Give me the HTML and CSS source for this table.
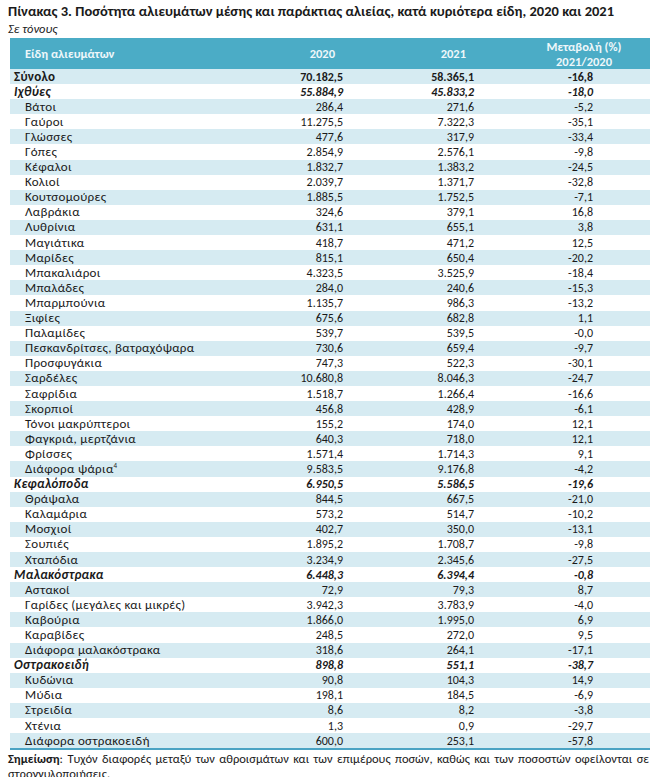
FILE: index.html
```html
<!DOCTYPE html>
<html lang="el">
<head>
<meta charset="utf-8">
<title>Πίνακας 3</title>
<link rel="stylesheet" href="styles.css">
</head>
<body>
<h1 class="title">Πίνακας 3. Ποσότητα αλιευμάτων μέσης και παράκτιας αλιείας, κατά κυριότερα είδη, 2020 και 2021</h1>
<p class="unit">Σε τόνους</p>
<div class="data" role="table">
  <div class="row head" role="row"><span class="h-name">Είδη αλιευμάτων</span><span class="h-a">2020</span><span class="h-b">2021</span><span class="h-c">Μεταβολή (%)<br>2021/2020</span></div>
  <div class="row odd total" role="row"><span>Σύνολο</span><span>70.182,5</span><span>58.365,1</span><span>-16,8</span></div>
  <div class="row group" role="row"><span>Ιχθύες</span><span>55.884,9</span><span>45.833,2</span><span>-18,0</span></div>
  <div class="row odd" role="row"><span>Βάτοι</span><span>286,4</span><span>271,6</span><span>-5,2</span></div>
  <div class="row" role="row"><span>Γαύροι</span><span>11.275,5</span><span>7.322,3</span><span>-35,1</span></div>
  <div class="row odd" role="row"><span>Γλώσσες</span><span>477,6</span><span>317,9</span><span>-33,4</span></div>
  <div class="row" role="row"><span>Γόπες</span><span>2.854,9</span><span>2.576,1</span><span>-9,8</span></div>
  <div class="row odd" role="row"><span>Κέφαλοι</span><span>1.832,7</span><span>1.383,2</span><span>-24,5</span></div>
  <div class="row" role="row"><span>Κολιοί</span><span>2.039,7</span><span>1.371,7</span><span>-32,8</span></div>
  <div class="row odd" role="row"><span>Κουτσομούρες</span><span>1.885,5</span><span>1.752,5</span><span>-7,1</span></div>
  <div class="row" role="row"><span>Λαβράκια</span><span>324,6</span><span>379,1</span><span>16,8</span></div>
  <div class="row odd" role="row"><span>Λυθρίνια</span><span>631,1</span><span>655,1</span><span>3,8</span></div>
  <div class="row" role="row"><span>Μαγιάτικα</span><span>418,7</span><span>471,2</span><span>12,5</span></div>
  <div class="row odd" role="row"><span>Μαρίδες</span><span>815,1</span><span>650,4</span><span>-20,2</span></div>
  <div class="row" role="row"><span>Μπακαλιάροι</span><span>4.323,5</span><span>3.525,9</span><span>-18,4</span></div>
  <div class="row odd" role="row"><span>Μπαλάδες</span><span>284,0</span><span>240,6</span><span>-15,3</span></div>
  <div class="row" role="row"><span>Μπαρμπούνια</span><span>1.135,7</span><span>986,3</span><span>-13,2</span></div>
  <div class="row odd" role="row"><span>Ξιφίες</span><span>675,6</span><span>682,8</span><span>1,1</span></div>
  <div class="row" role="row"><span>Παλαμίδες</span><span>539,7</span><span>539,5</span><span>-0,0</span></div>
  <div class="row odd" role="row"><span>Πεσκανδρίτσες, βατραχόψαρα</span><span>730,6</span><span>659,4</span><span>-9,7</span></div>
  <div class="row" role="row"><span>Προσφυγάκια</span><span>747,3</span><span>522,3</span><span>-30,1</span></div>
  <div class="row odd" role="row"><span>Σαρδέλες</span><span>10.680,8</span><span>8.046,3</span><span>-24,7</span></div>
  <div class="row" role="row"><span>Σαφρίδια</span><span>1.518,7</span><span>1.266,4</span><span>-16,6</span></div>
  <div class="row odd" role="row"><span>Σκορπιοί</span><span>456,8</span><span>428,9</span><span>-6,1</span></div>
  <div class="row" role="row"><span>Τόνοι μακρύπτεροι</span><span>155,2</span><span>174,0</span><span>12,1</span></div>
  <div class="row odd" role="row"><span>Φαγκριά, μερτζάνια</span><span>640,3</span><span>718,0</span><span>12,1</span></div>
  <div class="row" role="row"><span>Φρίσσες</span><span>1.571,4</span><span>1.714,3</span><span>9,1</span></div>
  <div class="row odd" role="row"><span>Διάφορα ψάρια<sup>4</sup></span><span>9.583,5</span><span>9.176,8</span><span>-4,2</span></div>
  <div class="row group" role="row"><span>Κεφαλόποδα</span><span>6.950,5</span><span>5.586,5</span><span>-19,6</span></div>
  <div class="row odd" role="row"><span>Θράψαλα</span><span>844,5</span><span>667,5</span><span>-21,0</span></div>
  <div class="row" role="row"><span>Καλαμάρια</span><span>573,2</span><span>514,7</span><span>-10,2</span></div>
  <div class="row odd" role="row"><span>Μοσχιοί</span><span>402,7</span><span>350,0</span><span>-13,1</span></div>
  <div class="row" role="row"><span>Σουπιές</span><span>1.895,2</span><span>1.708,7</span><span>-9,8</span></div>
  <div class="row odd" role="row"><span>Χταπόδια</span><span>3.234,9</span><span>2.345,6</span><span>-27,5</span></div>
  <div class="row group" role="row"><span>Μαλακόστρακα</span><span>6.448,3</span><span>6.394,4</span><span>-0,8</span></div>
  <div class="row odd" role="row"><span>Αστακοί</span><span>72,9</span><span>79,3</span><span>8,7</span></div>
  <div class="row" role="row"><span>Γαρίδες (μεγάλες και μικρές)</span><span>3.942,3</span><span>3.783,9</span><span>-4,0</span></div>
  <div class="row odd" role="row"><span>Καβούρια</span><span>1.866,0</span><span>1.995,0</span><span>6,9</span></div>
  <div class="row" role="row"><span>Καραβίδες</span><span>248,5</span><span>272,0</span><span>9,5</span></div>
  <div class="row odd" role="row"><span>Διάφορα μαλακόστρακα</span><span>318,6</span><span>264,1</span><span>-17,1</span></div>
  <div class="row group" role="row"><span>Οστρακοειδή</span><span>898,8</span><span>551,1</span><span>-38,7</span></div>
  <div class="row odd" role="row"><span>Κυδώνια</span><span>90,8</span><span>104,3</span><span>14,9</span></div>
  <div class="row" role="row"><span>Μύδια</span><span>198,1</span><span>184,5</span><span>-6,9</span></div>
  <div class="row odd" role="row"><span>Στρειδία</span><span>8,6</span><span>8,2</span><span>-3,8</span></div>
  <div class="row" role="row"><span>Χτένια</span><span>1,3</span><span>0,9</span><span>-29,7</span></div>
  <div class="row odd last" role="row"><span>Διάφορα οστρακοειδή</span><span>600,0</span><span>253,1</span><span>-57,8</span></div>
</div>
<p class="note"><b>Σημείωση</b>: Τυχόν διαφορές μεταξύ των αθροισμάτων και των επιμέρους ποσών, καθώς και των ποσοστών οφείλονται σε στρογγυλοποιήσεις.</p>
</body>
</html>
```

FILE: styles.css
```css
html {
  margin: 0;
  padding: 0;
  height: 777px;
  overflow: hidden;
  background: #ffffff;
}
body {
  margin: 0;
  height: 777px;
  overflow: hidden;
  box-sizing: border-box;
  padding: 2px 8px 0 8px;
  font-family: Calibri, Carlito, "Open Sans", sans-serif;
  font-size: 12px;
  color: #1a1a1a;
}
.title {
  margin: 0;
  font-size: 14.5px;
  font-weight: bold;
  line-height: 18px;
}
.unit {
  margin: 1px 0 0 0;
  font-size: 12.5px;
  font-style: italic;
  line-height: 16px;
}
.data {
  margin: 1px 0 0 2px;
  width: 640px;
  display: flex;
  flex-direction: column;
  border-bottom: 2px solid #4aa3c3;
}
.row {
  display: grid;
  grid-template-columns: 280px 63px 131px 166px;
  height: 15.1px;
  flex: none;
  align-items: center;
  line-height: 14px;
  white-space: nowrap;
}
.row.odd {
  background: #d6ebf2;
}
.row > span {
  text-align: right;
  padding-right: 10px;
}
.row > span:first-child {
  text-align: left;
  padding: 0 0 0 15px;
  font-size: 13px;
  letter-spacing: 0.3px;
}
.row > span:last-child {
  padding-right: 57px;
}
.row.total, .row.group {
  font-weight: bold;
}
.row.group {
  font-style: italic;
}
.row.total > span:first-child, .row.group > span:first-child {
  padding-left: 4px;
}
.row.head {
  height: 31px;
  background: #4bacc6;
  color: #eef7fa;
  font-weight: bold;
  line-height: 15px;
}
.row.head > span { font-size: 12.5px; letter-spacing: 0; }
.row.head > .h-name { padding-left: 15px; }
.row.head > .h-a { padding-right: 18px; }
.row.head > .h-b { padding-right: 18px; }
.row.head > .h-c { text-align: center; padding: 0 0 0 34px; }
sup {
  font-size: 7px;
  line-height: 0;
  vertical-align: 5px;
}
.note {
  margin: 1px 0 0 0;
  text-align: justify;
  line-height: 15px;
  font-size: 12.5px;
}
```
